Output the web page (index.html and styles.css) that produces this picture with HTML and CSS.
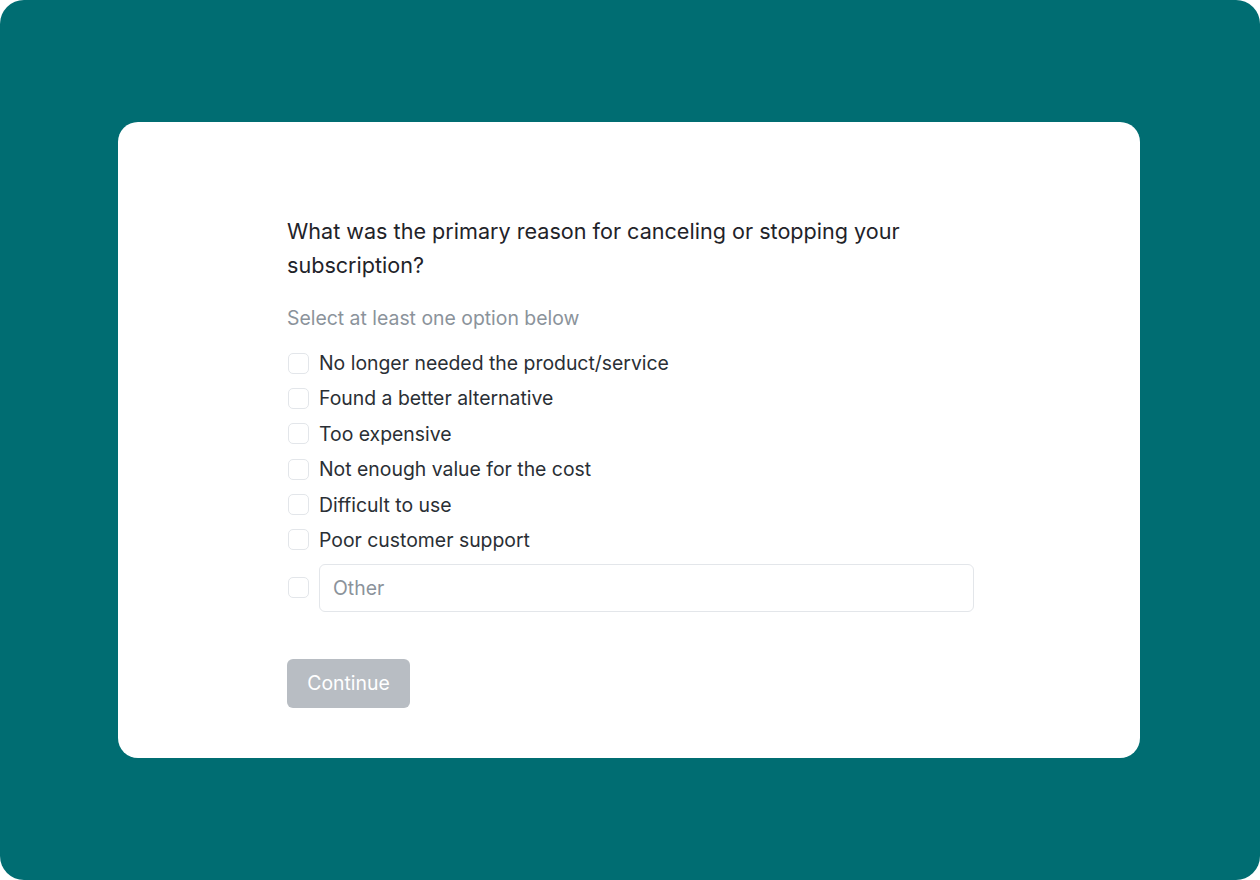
FILE: index.html
```html
<!DOCTYPE html>
<html lang="en">
<head>
<meta charset="utf-8">
<title>Cancellation survey</title>
<link rel="stylesheet" href="styles.css">
</head>
<body>
<div class="frame">
  <div class="card">
    <form class="survey">
      <h1 class="question">What was the primary reason for canceling or stopping your subscription?</h1>
      <p class="hint">Select at least one option below</p>
      <div class="options">
        <label class="option"><input type="checkbox" class="box"><span>No longer needed the product/service</span></label>
        <label class="option"><input type="checkbox" class="box"><span>Found a better alternative</span></label>
        <label class="option"><input type="checkbox" class="box"><span>Too expensive</span></label>
        <label class="option"><input type="checkbox" class="box"><span>Not enough value for the cost</span></label>
        <label class="option"><input type="checkbox" class="box"><span>Difficult to use</span></label>
        <label class="option"><input type="checkbox" class="box"><span>Poor customer support</span></label>
        <div class="option other-row"><input type="checkbox" class="box"><input type="text" class="other" placeholder="Other"></div>
      </div>
      <button type="button" class="continue" disabled>Continue</button>
    </form>
  </div>
</div>
</body>
</html>
```
FILE: styles.css
```css
* { box-sizing: border-box; }
html, body { margin: 0; padding: 0; background: #ffffff; }
body {
  font-family: Inter, "Noto Sans", sans-serif;
  width: 1260px;
  height: 880px;
}
.frame {
  width: 1260px;
  height: 880px;
  background: #006d72;
  border-radius: 24px;
  padding: 122px 120px 122px 118px;
}
.card {
  background: #ffffff;
  border-radius: 20px;
  height: 636px;
  padding: 92px 166px 0 169px;
}
.survey {
  display: flex;
  flex-direction: column;
  align-items: flex-start;
  width: 687px;
}
.question {
  margin: 0;
  font-size: 21.6px;
  font-weight: 400;
  line-height: 34px;
  color: #1f2329;
  letter-spacing: 0;
}
.hint {
  margin: 22px 0 0;
  font-size: 19.4px;
  line-height: 29px;
  color: #8b939b;
}
.options {
  margin-top: 16px;
  display: flex;
  flex-direction: column;
  gap: 7.4px;
  width: 100%;
}
.option {
  display: flex;
  align-items: center;
  gap: 10px;
  font-size: 19.4px;
  line-height: 28px;
  color: #2a2f35;
  cursor: pointer;
}
.box {
  appearance: none;
  -webkit-appearance: none;
  margin: 0 0 0 1px;
  width: 21px;
  height: 21px;
  border: 1px solid #e3e6ea;
  border-radius: 5px;
  background: #fff;
  flex: none;
}
.other-row { margin-top: 2.5px; }
.other {
  flex: 1;
  height: 48px;
  border: 1px solid #e3e6ea;
  border-radius: 6px;
  padding: 0 13px;
  font-family: inherit;
  font-size: 19.4px;
  color: #2a2f35;
  outline: none;
}
.other::placeholder { color: #8b939b; }
.continue {
  margin-top: 47px;
  width: 123px;
  height: 49px;
  border: none;
  border-radius: 6px;
  background: #b8bdc3;
  color: #ffffff;
  font-family: inherit;
  font-size: 19.4px;
  font-weight: 400;
  padding: 0;
}
```
